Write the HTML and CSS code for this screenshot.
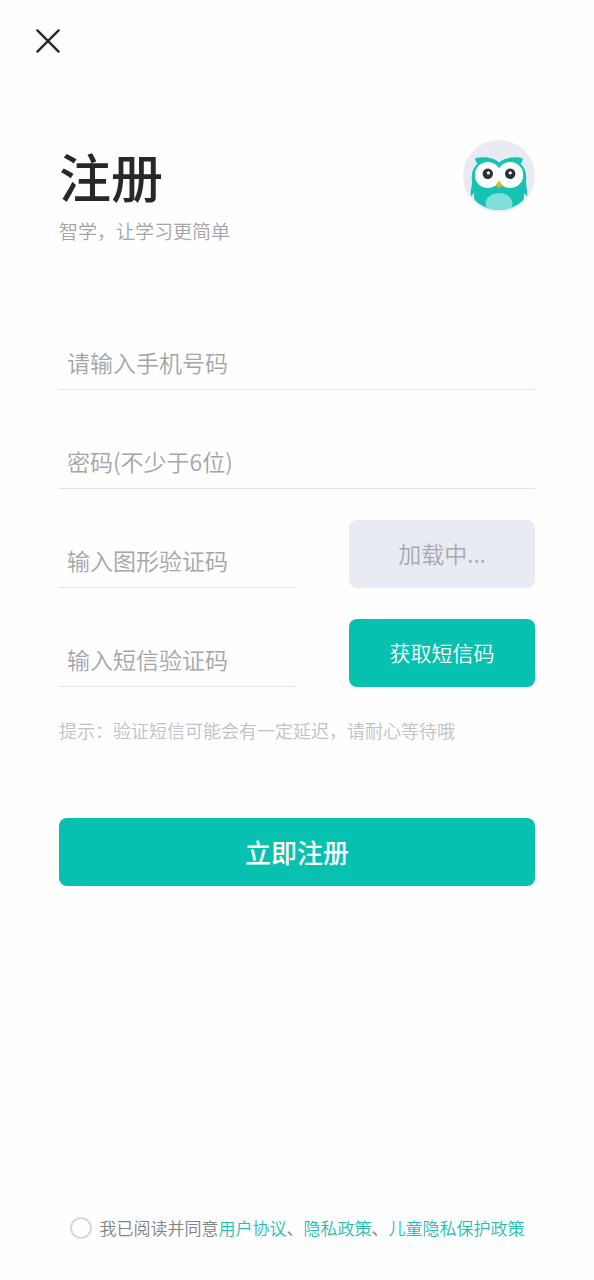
FILE: index.html
```html
<!DOCTYPE html>
<html lang="zh-CN">
<head>
<meta charset="utf-8">
<meta name="viewport" content="width=device-width, initial-scale=1">
<title>注册</title>
<link rel="stylesheet" href="styles.css">
</head>
<body>
<div class="page">
  <nav class="topbar">
    <button class="close" type="button" aria-label="关闭">
      <svg class="close-icon" viewBox="0 0 24 24" aria-hidden="true"><path d="M1.4 1.4 22.6 22.6M22.6 1.4 1.4 22.6"/></svg>
    </button>
  </nav>

  <main class="content">
    <header class="header">
      <div class="heading">
        <h1 class="title">注册</h1>
        <p class="subtitle">智学，让学习更简单</p>
      </div>
      <svg class="avatar" viewBox="0 0 72 72" role="img" aria-label="智学">
        <defs><clipPath id="disc"><circle cx="36" cy="34.5" r="35.5"/></clipPath></defs>
        <circle cx="36" cy="36" r="36" fill="#e8ebf1"/>
        <g clip-path="url(#disc)">
          <path fill="#16c3b2" d="M12 18.5C18 16.6 29 16.3 36 22.5 43 16.3 54 16.6 60 18.5 59.7 21 58.5 22.5 57.5 23.6 62.3 28 64 34 63 41.5 62.6 45.5 64.9 49 64.2 56.5 63.2 55.5 61.8 54 61.1 53 61.1 59 60 64 58.2 68.6 50 72 22 72 13.8 68.6 12 64 10.9 59 10.9 53 10.2 54 8.8 55.5 7.8 56.5 7.1 49 9.4 45.5 9 41.5 8 34 9.7 28 14.5 23.6 13.5 22.5 12.3 21 12 18.5Z"/>
          <ellipse cx="36" cy="64" rx="13.5" ry="11" fill="#7ee0d8"/>
        </g>
        <circle cx="24.8" cy="35" r="13" fill="#fff"/>
        <circle cx="47.2" cy="35" r="13" fill="#fff"/>
        <circle cx="24.8" cy="33.7" r="5.2" fill="#2d3034"/>
        <circle cx="47.2" cy="33.7" r="5.2" fill="#2d3034"/>
        <circle cx="25.4" cy="32.9" r="1.6" fill="#fff"/>
        <circle cx="47.2" cy="32.9" r="1.6" fill="#fff"/>
        <path d="M36 40.8C37.2 42.4 38.5 43.5 39 44.6 38.4 46.4 37.2 47.6 36 48.5 34.8 47.6 33.6 46.4 33 44.6 33.5 43.5 34.8 42.4 36 40.8Z" fill="#dcba2f"/>
      </svg>
    </header>

    <form class="form" id="register">
      <input class="field" type="tel" aria-label="手机号码" placeholder="请输入手机号码">
      <input class="field" type="password" aria-label="密码" placeholder="密码(不少于6位)">
      <div class="row">
        <input class="field" type="text" aria-label="图形验证码" placeholder="输入图形验证码">
        <button class="code code-loading" type="button" disabled>加载中...</button>
      </div>
      <div class="row">
        <input class="field" type="text" aria-label="短信验证码" placeholder="输入短信验证码">
        <button class="code code-sms" type="button">获取短信码</button>
      </div>
    </form>
    <p class="hint">提示：验证短信可能会有一定延迟，请耐心等待哦</p>
    <button class="submit" type="submit" form="register">立即注册</button>
  </main>

  <footer class="agreement">
    <input class="agree" id="agree" type="checkbox">
    <p class="terms"><label for="agree">我已阅读并同意</label><a class="link" href="#terms">用户协议</a>、<a class="link" href="#privacy">隐私政策</a>、<a class="link" href="#children">儿童隐私保护政策</a></p>
  </footer>
</div>
</body>
</html>
```
FILE: styles.css
```css
* {
  box-sizing: border-box;
}

body {
  margin: 0;
  background: #fefefe;
  color: #26282b;
  font-family: "Noto Sans CJK SC", sans-serif;
  font-weight: 350;
}

button,
input {
  margin: 0;
  border: 0;
  font-family: inherit;
  font-weight: inherit;
}

.page {
  display: flex;
  flex-direction: column;
  min-height: 100vh;
  padding-bottom: 38px;
}

.topbar {
  padding: 21px 28px 19px;
}

.close {
  display: flex;
  padding: 8px;
  background: none;
}

.close-icon {
  width: 24px;
  height: 24px;
  fill: none;
  stroke: #26282b;
  stroke-width: 2.4;
  stroke-linecap: round;
}

.content {
  display: flex;
  flex-direction: column;
  padding: 60px 59px 48px;
}

.header {
  display: flex;
  justify-content: space-between;
  align-items: flex-start;
}

.title {
  margin: 6px 0 0;
  font-size: 52px;
  font-weight: 500;
  line-height: 60px;
}

.subtitle {
  margin: 13px 0 0;
  color: #a3a4a6;
  font-size: 19px;
  line-height: 24px;
}

.avatar {
  flex: none;
  width: 72px;
  height: 72px;
}

.form {
  display: flex;
  flex-direction: column;
  gap: 31px;
  margin-top: 79px;
}

.row {
  display: grid;
  grid-template-columns: 236fr 186fr;
  gap: 54px;
}

.field {
  width: 100%;
  min-width: 0;
  height: 68px;
  padding: 13px 8px 0;
  border-bottom: 1px solid #e3e4e6;
  border-radius: 0;
  outline: none;
  background: none;
  color: #26282b;
  font-size: 23px;
}

.field::placeholder {
  color: #a3a5a9;
  opacity: 1;
}

.code,
.submit {
  height: 68px;
  padding: 0 0 2px;
  border-radius: 8px;
  color: #fff;
}

.code-loading {
  background: #e8ebf1;
  color: #a6aab3;
  font-size: 23px;
}

.code-sms {
  background: #07c1b0;
  font-size: 21px;
}

.hint {
  margin: 31px 0 0;
  color: #bfc1c6;
  font-size: 18px;
  line-height: 24px;
}

.submit {
  margin-top: 76px;
  background: #07c1b0;
  font-size: 26px;
  font-weight: 500;
}

.agreement {
  display: flex;
  justify-content: center;
  align-items: center;
  gap: 8px;
  margin-top: auto;
}

.agree {
  flex: none;
  width: 22px;
  height: 22px;
  border: 2px solid #d6d7d9;
  border-radius: 50%;
  appearance: none;
}

.agree:checked {
  background: #07c1b0;
}

.terms {
  margin: 0;
  color: #808285;
  font-size: 17px;
  line-height: 28px;
}

.link {
  color: #1fc0af;
  text-decoration: none;
}
```
